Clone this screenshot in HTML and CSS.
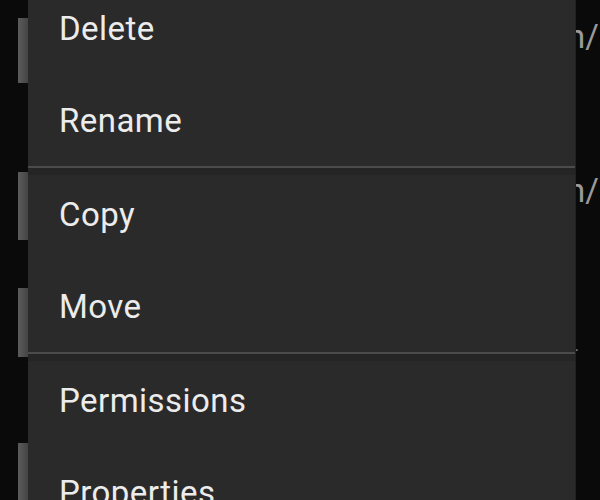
FILE: index.html
```html
<!DOCTYPE html>
<html>
<head>
<meta charset="utf-8">
<link rel="stylesheet" href="styles.css">
</head>
<body>
<div class="screen">
  <ul class="files">
    <li class="file f1"><span class="bar"></span><span class="path">n/</span></li>
    <li class="file f2"><span class="bar"></span><span class="path">n/</span></li>
    <li class="file f3"><span class="bar"></span><span class="path small">+</span></li>
    <li class="file f4"><span class="bar"></span><span class="path"></span></li>
  </ul>
  <div class="menu">
    <div class="item">Delete</div>
    <div class="item">Rename</div>
    <div class="item sep">Copy</div>
    <div class="item">Move</div>
    <div class="item sep">Permissions</div>
    <div class="item">Properties</div>
  </div>
</div>
</body>
</html>
```
FILE: styles.css
```css
html, body {
  margin: 0;
  padding: 0;
  background: #0a0a0a;
}
.screen {
  position: relative;
  width: 600px;
  height: 500px;
  overflow: hidden;
  font-family: Roboto, "Liberation Sans", sans-serif;
}
.files {
  list-style: none;
  margin: 0;
  padding: 0;
  display: flex;
  flex-direction: column;
}
.file {
  display: flex;
  justify-content: space-between;
  align-items: flex-start;
}
.bar {
  width: 10px;
  margin-left: 18px;
  height: 100%;
  background: linear-gradient(to right, #5c5c5c, #444);
}
.path {
  color: #9a9a9a;
  font-size: 33px;
  line-height: 1;
  width: 33px;
  margin-top: 2px;
  white-space: nowrap;
}
.path.small {
  font-size: 20px;
  margin-top: 52px;
  color: #777;
}
.f1 { margin-top: 18px; height: 65px; }
.f2 { margin-top: 89px; height: 68px; }
.f3 { margin-top: 48px; height: 69px; }
.f4 { margin-top: 86px; height: 60px; }

.menu {
  position: absolute;
  left: 28px;
  top: -18px;
  width: 547px;
  background: #2a2a2a;
  box-shadow: 1px 0 0 #202020;
}
.item {
  height: 92px;
  display: flex;
  align-items: center;
  padding-left: 31px;
  color: #ececec;
  font-size: 33px;
  letter-spacing: 0.45px;
}
.item.sep {
  border-top: 2px solid #4b4b4b;
  box-shadow: inset 0 7px 0 #252525;
}
```
